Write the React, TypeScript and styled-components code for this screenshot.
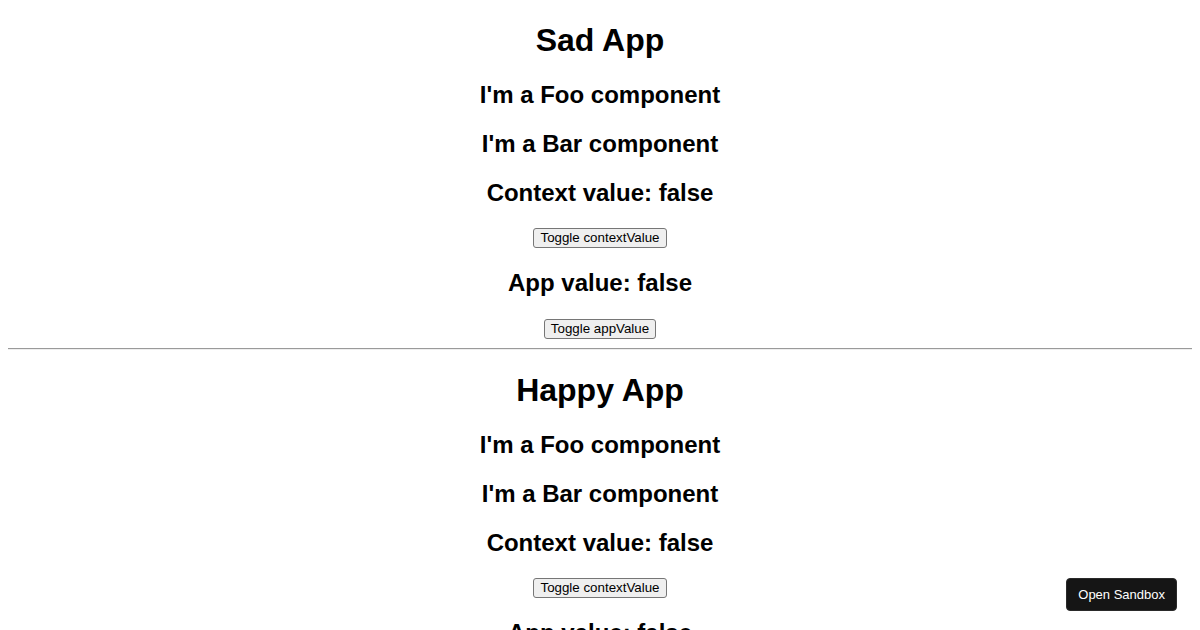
import React, { useState, createContext, useContext } from "react";
import styled, { createGlobalStyle } from "styled-components";

const GlobalStyle = createGlobalStyle`
  body {
    margin: 0;
    font-family: "Liberation Sans", Arial, sans-serif;
    color: #000;
    background: #fff;
  }
`;

const Page = styled.main`
  display: flow-root;
  padding: 0 8px;
  text-align: center;
`;

const Title = styled.h1`
  font-size: 32px;
  line-height: 1.2;
  margin: 21.44px 0;
  font-weight: bold;
`;

const Heading = styled.h2`
  font-size: 24px;
  line-height: 1.2;
  margin: 19.92px 0;
  font-weight: bold;
`;

const ButtonRow = styled.div`
  height: 22px;
  display: flex;
  align-items: center;
  justify-content: center;
`;

const ToggleButton = styled.button`
  font-family: "Liberation Sans", Arial, sans-serif;
  font-size: 13.33px;
  line-height: 16px;
  height: 20px;
  padding: 1px 6px;
  background: #efefef;
  border: 1px solid #767676;
  border-radius: 3px;
  color: #000;
  cursor: pointer;
  box-sizing: border-box;
`;

const Divider = styled.hr`
  margin: 8px 0;
  border: none;
  border-top: 1px solid #9a9a9a;
  border-bottom: 1px solid #eeeeee;
`;

const SandboxLink = styled.a`
  position: fixed;
  right: 23px;
  bottom: 19px;
  height: 33px;
  padding: 0 11px;
  display: flex;
  align-items: center;
  background: #151515;
  color: #fff;
  border: 1px solid #2a2a2a;
  border-radius: 4px;
  font-family: "Liberation Sans", Arial, sans-serif;
  font-size: 13px;
  text-decoration: none;
  box-sizing: border-box;
`;

const ValueContext = createContext(false);

const Foo = () => <Heading>I'm a Foo component</Heading>;
const Bar = () => <Heading>I'm a Bar component</Heading>;

const ContextValue = ({ onToggle }: { onToggle: () => void }) => {
  const value = useContext(ValueContext);
  return (
    <>
      <Heading>Context value: {String(value)}</Heading>
      <ButtonRow>
        <ToggleButton onClick={onToggle}>Toggle contextValue</ToggleButton>
      </ButtonRow>
    </>
  );
};

const Demo = ({ title }: { title: string }) => {
  const [contextValue, setContextValue] = useState(false);
  const [appValue, setAppValue] = useState(false);
  return (
    <ValueContext.Provider value={contextValue}>
      <Title>{title}</Title>
      <Foo />
      <Bar />
      <ContextValue onToggle={() => setContextValue((v) => !v)} />
      <Heading>App value: {String(appValue)}</Heading>
      <ButtonRow>
        <ToggleButton onClick={() => setAppValue((v) => !v)}>Toggle appValue</ToggleButton>
      </ButtonRow>
    </ValueContext.Provider>
  );
};

export default function App() {
  return (
    <Page>
      <GlobalStyle />
      <Demo title="Sad App" />
      <Divider />
      <Demo title="Happy App" />
      <SandboxLink href="#">Open Sandbox</SandboxLink>
    </Page>
  );
}
